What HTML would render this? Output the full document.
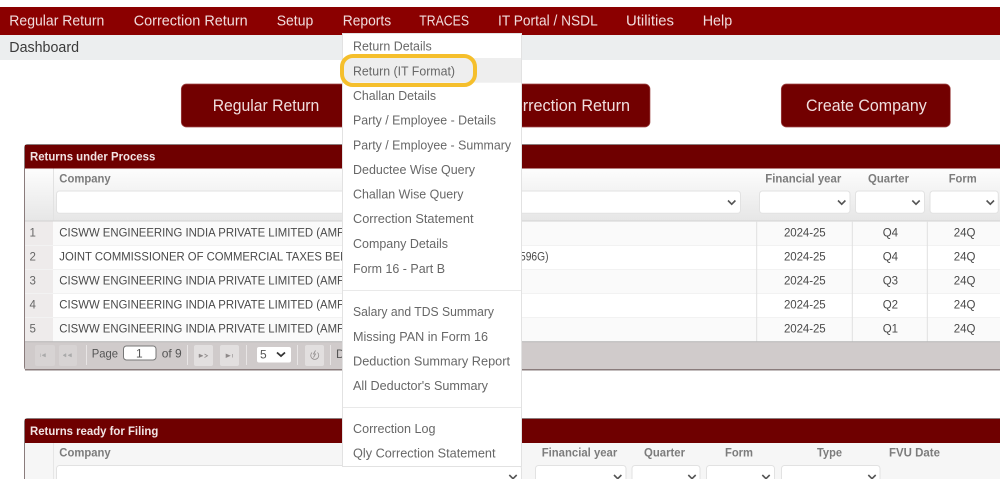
<!DOCTYPE html>
<html lang="en">
<head>
<meta charset="utf-8">
<title>Dashboard</title>
<style>
html,body{margin:0;padding:0;background:#fff;width:1000px;height:479px;overflow:hidden}
svg{display:block;position:absolute;left:0;top:0;filter:blur(.35px)}
text{font-family:"Liberation Sans",Arial,sans-serif}
.nav{font-size:14.5px;fill:#f0dcdc}
.btn{font-size:17px;fill:#f0dede}
.ttl{font-size:11.5px;font-weight:bold;fill:#f2e4e4}
.hd{font-size:11.5px;font-weight:bold;fill:#7c7c7c}
.c{font-size:11.5px;fill:#4a4a4a}
.n{font-size:11.5px;fill:#666}
.m{font-size:13px;fill:#676767}
.p{font-size:12px;fill:#555}
.sel{fill:#fff;stroke:#e2e2e2}
.chev{fill:none;stroke:#555;stroke-width:1.6}
.pb{fill:#d7d3d3}
.sep{stroke:#e8e5e5;stroke-width:1}
</style>
</head>
<body>
<svg width="1000" height="479" viewBox="0 0 1000 479" xmlns="http://www.w3.org/2000/svg">
<defs>
<linearGradient id="g" x1="0" y1="0" x2="0" y2="1"><stop offset="0" stop-color="#fdfdfd"/><stop offset="1" stop-color="#e6e6e6"/></linearGradient>
</defs>

<!-- top nav -->
<rect x="0" y="7" width="1000" height="28" fill="#8b0000"/>
<rect x="0" y="35" width="1000" height="25" fill="#eceeef"/>
<text class="nav" x="9.3" y="25.5" textLength="95" lengthAdjust="spacingAndGlyphs">Regular Return</text>
<text class="nav" x="133.7" y="25.5" textLength="114" lengthAdjust="spacingAndGlyphs">Correction Return</text>
<text class="nav" x="276.7" y="25.5" textLength="36.6" lengthAdjust="spacingAndGlyphs">Setup</text>
<text class="nav" x="342.7" y="25.5" textLength="48.5" lengthAdjust="spacingAndGlyphs">Reports</text>
<text class="nav" x="419.3" y="25.5" textLength="49.7" lengthAdjust="spacingAndGlyphs" style="font-size:15.2px">TRACES</text>
<text class="nav" x="498" y="25.5" textLength="99.7" lengthAdjust="spacingAndGlyphs">IT Portal / NSDL</text>
<text class="nav" x="626" y="25.5" textLength="48" lengthAdjust="spacingAndGlyphs">Utilities</text>
<text class="nav" x="702.7" y="25.5" textLength="29.5" lengthAdjust="spacingAndGlyphs">Help</text>
<text x="9.3" y="52" font-size="14.5" fill="#3a3a3a" textLength="69.7" lengthAdjust="spacingAndGlyphs">Dashboard</text>

<!-- big buttons -->
<rect x="181.3" y="84" width="170" height="43" rx="5" fill="#720000" stroke="#a04a4a" stroke-width=".7"/>
<rect x="482" y="84" width="168" height="43" rx="5" fill="#720000" stroke="#a04a4a" stroke-width=".7"/>
<rect x="781.3" y="84" width="169" height="43" rx="5" fill="#720000" stroke="#a04a4a" stroke-width=".7"/>
<text class="btn" x="212.7" y="111" textLength="106.6" lengthAdjust="spacingAndGlyphs">Regular Return</text>
<text class="btn" x="502" y="111" textLength="128" lengthAdjust="spacingAndGlyphs">Correction Return</text>
<text class="btn" x="806" y="111" textLength="120.7" lengthAdjust="spacingAndGlyphs">Create Company</text>

<!-- panel 1 -->
<rect x="24.5" y="144.5" width="985" height="225.5" rx="3" fill="#fff" stroke="#8a7c7c"/>
<rect x="25" y="145" width="985" height="23.5" fill="#6f0000"/>
<text class="ttl" x="30" y="160.7" textLength="125.3" lengthAdjust="spacingAndGlyphs">Returns under Process</text>
<rect x="25" y="168.5" width="985" height="52.5" fill="url(#g)"/>
<line x1="53.5" y1="168.5" x2="53.5" y2="221" stroke="#e2e2e2"/>
<line x1="25" y1="221" x2="1000" y2="221" stroke="#d2d2d2"/>
<text class="hd" x="59.3" y="182.7" textLength="51.4" lengthAdjust="spacingAndGlyphs">Company</text>
<text class="hd" x="765.3" y="182.7" textLength="76" lengthAdjust="spacingAndGlyphs">Financial year</text>
<text class="hd" x="868" y="182.7" textLength="41" lengthAdjust="spacingAndGlyphs">Quarter</text>
<text class="hd" x="948.7" y="182.7" textLength="28" lengthAdjust="spacingAndGlyphs">Form</text>
<rect class="sel" x="56.5" y="191" width="684" height="22.3" rx="3"/>
<rect class="sel" x="759.5" y="191" width="90.5" height="22.3" rx="3"/>
<rect class="sel" x="855.5" y="191" width="69" height="22.3" rx="3"/>
<rect class="sel" x="930" y="191" width="68.3" height="22.3" rx="3"/>
<path class="chev" d="M728 200.5l3.7 3.7 3.7-3.7M838 200.5l3.7 3.7 3.7-3.7M912.3 200.5l3.7 3.7 3.7-3.7M986.6 200.5l3.7 3.7 3.7-3.7"/>

<!-- rows -->
<rect x="53" y="221.5" width="947" height="24" fill="#fafafa"/>
<rect x="53" y="269.5" width="947" height="24" fill="#fafafa"/>
<rect x="53" y="317.5" width="947" height="24" fill="#fafafa"/>
<rect x="25" y="221.5" width="28" height="120" fill="#eeebeb"/>
<path d="M25 245.5H1000M25 269.5H1000M25 293.5H1000M25 317.5H1000" stroke="#f2f2f2"/>
<path d="M756.7 221V341.5M852.3 221V341.5M927.3 221V341.5" stroke="#e0e0e0"/>
<text class="n" x="29.5" y="236.5">1</text>
<text class="n" x="29.5" y="260.7">2</text>
<text class="n" x="29.5" y="284.5">3</text>
<text class="n" x="29.5" y="308.5">4</text>
<text class="n" x="29.5" y="332.5">5</text>
<text class="c" x="59.3" y="236.5" textLength="284.7" lengthAdjust="spacingAndGlyphs">CISWW ENGINEERING INDIA PRIVATE LIMITED (AMF</text>
<text class="c" x="59.3" y="260.7" textLength="289" lengthAdjust="spacingAndGlyphs">JOINT COMMISSIONER OF COMMERCIAL TAXES BEN</text>
<text class="c" x="520" y="260.7" textLength="28.5" lengthAdjust="spacingAndGlyphs">596G)</text>
<text class="c" x="59.3" y="284.5" textLength="284.7" lengthAdjust="spacingAndGlyphs">CISWW ENGINEERING INDIA PRIVATE LIMITED (AMF</text>
<text class="c" x="59.3" y="308.5" textLength="284.7" lengthAdjust="spacingAndGlyphs">CISWW ENGINEERING INDIA PRIVATE LIMITED (AMF</text>
<text class="c" x="59.3" y="332.5" textLength="284.7" lengthAdjust="spacingAndGlyphs">CISWW ENGINEERING INDIA PRIVATE LIMITED (AMF</text>

<g>
<text class="c" x="784" y="236.5" textLength="41.7">2024-25</text><text class="c" x="882.7" y="236.5">Q4</text><text class="c" x="953.7" y="236.5">24Q</text>
<text class="c" x="784" y="260.7" textLength="41.7">2024-25</text><text class="c" x="882.7" y="260.7">Q4</text><text class="c" x="953.7" y="260.7">24Q</text>
<text class="c" x="784" y="284.5" textLength="41.7">2024-25</text><text class="c" x="882.7" y="284.5">Q3</text><text class="c" x="953.7" y="284.5">24Q</text>
<text class="c" x="784" y="308.5" textLength="41.7">2024-25</text><text class="c" x="882.7" y="308.5">Q2</text><text class="c" x="953.7" y="308.5">24Q</text>
<text class="c" x="784" y="332.5" textLength="41.7">2024-25</text><text class="c" x="882.7" y="332.5">Q1</text><text class="c" x="953.7" y="332.5">24Q</text>
</g>

<!-- pager -->
<rect x="25" y="342" width="985" height="27.5" fill="#d0cbcb"/>
<line x1="25" y1="341.7" x2="1000" y2="341.7" stroke="#b5b5b5"/>
<rect x="25" y="369" width="985" height="1.5" fill="#8a7c7c"/>
<rect class="pb" x="35" y="345" width="20" height="21" rx="2"/>
<rect class="pb" x="59" y="345" width="18" height="21" rx="2"/>
<rect x="194" y="345" width="19" height="21" rx="2" fill="#e2dfdf"/>
<rect x="220" y="345" width="19" height="21" rx="2" fill="#e2dfdf"/>
<rect x="305" y="345" width="19" height="21" rx="2" fill="#e2dfdf"/>
<path class="sep" d="M86.5 345V365M187.5 345V365M246.5 345V365M297.5 345V365M330.5 345V365"/>
<path d="M40.5 353.5v3.5M45.5 353.5l-3.5 1.8 3.500 1.700zM66 353.500l-3 1.800 3 1.700zM71.500 353.500l-3.500 1.800 3.500 1.700z" fill="#aaa" stroke="#aaa" stroke-width=".5"/>
<path d="M199 354l4 1.800-4 1.700z" fill="#8f8a8a" stroke="#8f8a8a" stroke-width=".5"/>
<path d="M204.500 354l3 1.800-3 1.700" fill="none" stroke="#8f8a8a" stroke-width=".8"/>
<path d="M226 354l4 1.800-4 1.700zM232.500 354v3.500" fill="#8f8a8a" stroke="#8f8a8a" stroke-width=".6"/>
<path d="M312 352.500a4 4 0 1 0 5.500 0M315.500 350.500l-2 3.500h2l-2 3.500" fill="none" stroke="#8f8a8a" stroke-width=".8"/>
<text class="p" x="91.700" y="357.300" textLength="26.300" lengthAdjust="spacingAndGlyphs">Page</text>
<rect x="123.500" y="346" width="32.500" height="14" rx="3" fill="#fff" stroke="#777"/>
<text class="p" x="136" y="357.300">1</text>
<text class="p" x="161.700" y="357.300" textLength="20">of 9</text>
<rect x="257" y="347" width="34" height="15.500" rx="2" fill="#fff"/>
<text class="p" x="260" y="358.500">5</text>
<path d="M277 352.500l4 3.500 4-3.500" fill="none" stroke="#333" stroke-width="1.800"/>
<text class="p" x="336" y="358">D</text>

<!-- panel 2 -->
<rect x="24.500" y="418.500" width="985" height="80" rx="3" fill="#fff" stroke="#8a7c7c"/>
<rect x="25" y="419" width="985" height="24" fill="#6f0000"/>
<text class="ttl" x="30" y="435" textLength="128.300" lengthAdjust="spacingAndGlyphs">Returns ready for Filing</text>
<rect x="25" y="443" width="985" height="36" fill="#f6f6f6"/>
<line x1="53.500" y1="443" x2="53.500" y2="479" stroke="#e6e6e6"/>
<text class="hd" x="59.300" y="456.700" textLength="51.400" lengthAdjust="spacingAndGlyphs">Company</text>
<text class="hd" x="541.700" y="456.700" textLength="75.600" lengthAdjust="spacingAndGlyphs">Financial year</text>
<text class="hd" x="644" y="456.700" textLength="41" lengthAdjust="spacingAndGlyphs">Quarter</text>
<text class="hd" x="725" y="456.700" textLength="28" lengthAdjust="spacingAndGlyphs">Form</text>
<text class="hd" x="817" y="456.700" textLength="25" lengthAdjust="spacingAndGlyphs">Type</text>
<text class="hd" x="889" y="456.700" textLength="51" lengthAdjust="spacingAndGlyphs">FVU Date</text>
<rect class="sel" x="56.500" y="465.500" width="465" height="22.300" rx="3"/>
<rect class="sel" x="535.500" y="465.500" width="90.500" height="22.300" rx="3"/>
<rect class="sel" x="632" y="465.500" width="68" height="22.300" rx="3"/>
<rect class="sel" x="706.500" y="465.500" width="68" height="22.300" rx="3"/>
<rect class="sel" x="781.500" y="465.500" width="98.500" height="22.300" rx="3"/>
<path class="chev" d="M509.300 475l3.700 3.700 3.700-3.700M614 475l3.700 3.700 3.700-3.700M688.300 475l3.700 3.700 3.700-3.700M762.300 475l3.700 3.700 3.700-3.700M868.300 475l3.700 3.700 3.700-3.700"/>

<!-- dropdown -->
<rect x="342.500" y="33.500" width="179" height="433" fill="#fff" stroke="#e2e2e2"/>
<rect x="343" y="58" width="178" height="24.700" fill="#eeeeee"/>
<path d="M343 290.500H521M343 407.500H521" stroke="#e9e9e9"/>
<text class="m" x="353" y="50.700" textLength="78.700" lengthAdjust="spacingAndGlyphs">Return Details</text>
<text class="m" x="353" y="75.500" textLength="102" lengthAdjust="spacingAndGlyphs">Return (IT Format)</text>
<text class="m" x="353" y="100" textLength="83" lengthAdjust="spacingAndGlyphs">Challan Details</text>
<text class="m" x="353" y="124.500" textLength="143" lengthAdjust="spacingAndGlyphs">Party / Employee - Details</text>
<text class="m" x="353" y="149.300" textLength="158" lengthAdjust="spacingAndGlyphs">Party / Employee - Summary</text>
<text class="m" x="353" y="174" textLength="122" lengthAdjust="spacingAndGlyphs">Deductee Wise Query</text>
<text class="m" x="353" y="198.500" textLength="110.500" lengthAdjust="spacingAndGlyphs">Challan Wise Query</text>
<text class="m" x="353" y="223" textLength="120.500" lengthAdjust="spacingAndGlyphs">Correction Statement</text>
<text class="m" x="353" y="248" textLength="95" lengthAdjust="spacingAndGlyphs">Company Details</text>
<text class="m" x="353" y="273" textLength="92" lengthAdjust="spacingAndGlyphs">Form 16 - Part B</text>
<text class="m" x="353" y="316" textLength="141" lengthAdjust="spacingAndGlyphs">Salary and TDS Summary</text>
<text class="m" x="353" y="341" textLength="135" lengthAdjust="spacingAndGlyphs">Missing PAN in Form 16</text>
<text class="m" x="353" y="365.500" textLength="157" lengthAdjust="spacingAndGlyphs">Deduction Summary Report</text>
<text class="m" x="353" y="390" textLength="135" lengthAdjust="spacingAndGlyphs">All Deductor's Summary</text>
<text class="m" x="353" y="433" textLength="82.500" lengthAdjust="spacingAndGlyphs">Correction Log</text>
<text class="m" x="353" y="457.500" textLength="142.500" lengthAdjust="spacingAndGlyphs">Qly Correction Statement</text>

<!-- highlight -->
<rect x="342" y="56" width="133" height="29" rx="11" fill="none" stroke="#f5bf2c" stroke-width="4"/>
</svg>
</body>
</html>
